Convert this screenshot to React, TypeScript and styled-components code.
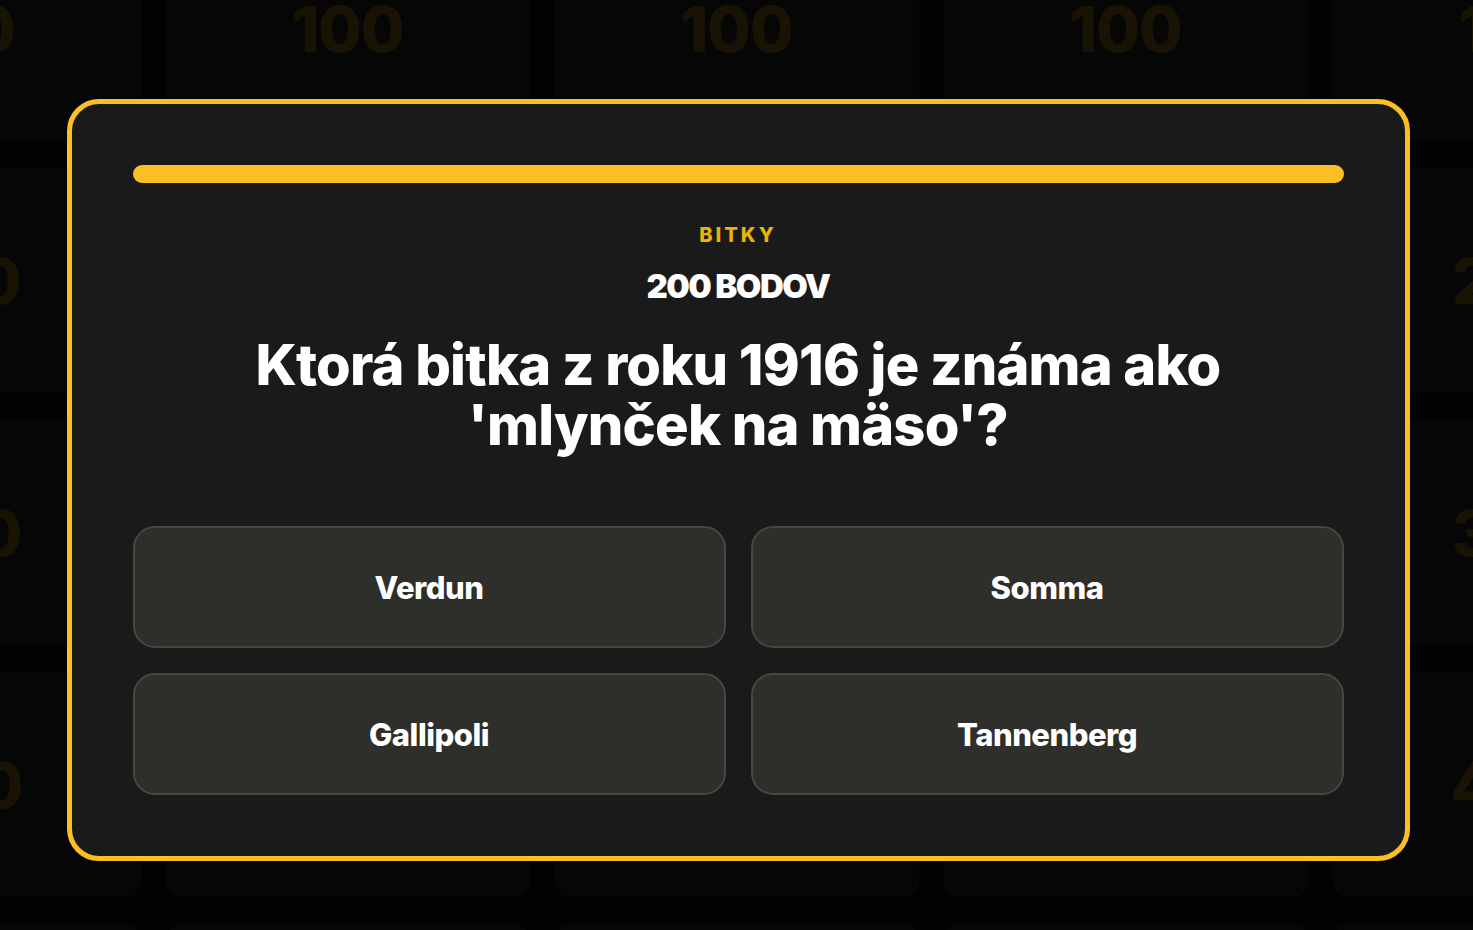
import React from 'react';
import styled, { createGlobalStyle } from 'styled-components';

const GlobalStyle = createGlobalStyle`
  html, body {
    margin: 0;
    padding: 0;
    background: #000;
  }
  body {
    font-family: Inter, "Noto Sans", "Liberation Sans", sans-serif;
  }
`;

const Screen = styled.div`
  position: relative;
  width: 100%;
  height: 930px;
  overflow: hidden;
  background: #161616;
`;

const BoardWrap = styled.div`
  display: flex;
  justify-content: center;
  margin-top: -84px;
`;

const Board = styled.div`
  flex: 0 0 1920px;
  display: grid;
  grid-template-columns: repeat(5, 364px);
  grid-auto-rows: 225px;
  column-gap: 25px;
  row-gap: 27px;
`;

const Tile = styled.div`
  display: flex;
  align-items: center;
  justify-content: center;
  background: #424242;
  border: 2px solid #4c4c4c;
  border-radius: 16px;
  box-sizing: border-box;

  font-weight: 800;
  font-size: 63px;
  letter-spacing: -1px;
  color: #fbbf24;
`;

const Overlay = styled.div`
  position: absolute;
  inset: 0;
  display: flex;
  align-items: center;
  justify-content: center;
  background: rgba(0, 0, 0, 0.9);
`;

const Modal = styled.div`
  width: 1343px;
  box-sizing: border-box;
  display: flex;
  flex-direction: column;
  align-items: stretch;
  padding: 61px;
  margin: 30px 0 0 3px;
  background: #1a1a1a;
  border: 5px solid #fbbf24;
  border-radius: 32px;
`;

const Progress = styled.div`
  height: 18px;
  border-radius: 9px;
  background: #fbbf24;
`;

const Category = styled.div`
  margin-top: 38px;
  text-align: center;
  font-weight: 800;
  font-size: 20px;
  line-height: 28px;
  letter-spacing: 3px;
  color: #eab308;
`;

const Points = styled.div`
  margin-top: 17px;
  text-align: center;
  font-weight: 900;
  font-size: 33px;
  line-height: 40px;
  letter-spacing: -1.5px;
  color: #ffffff;
`;

const Question = styled.h2`
  margin: 29px 0 0;
  text-align: center;
  font-weight: 800;
  font-size: 56px;
  line-height: 60px;
  letter-spacing: -0.8px;
  color: #ffffff;
`;

const Answers = styled.div`
  margin-top: 71px;
  display: grid;
  grid-template-columns: 1fr 1fr;
  grid-auto-rows: 122px;
  gap: 25px;
`;

const Answer = styled.button`
  display: flex;
  align-items: center;
  justify-content: center;
  background: #2e2e2a;
  border: 2px solid #47473f;
  border-radius: 22px;
  font-family: inherit;
  font-weight: 800;
  font-size: 31px;
  letter-spacing: -0.5px;
  color: #ffffff;
  cursor: pointer;
`;

const rows = [100, 200, 300, 400, 500];
const answers = ['Verdun', 'Somma', 'Gallipoli', 'Tannenberg'];

const App: React.FC = () => {
  return (
    <Screen>
      <GlobalStyle />
      <BoardWrap>
        <Board>
          {rows.map(value =>
            [0, 1, 2, 3, 4].map(col => <Tile key={`${value}-${col}`}>{value}</Tile>)
          )}
        </Board>
      </BoardWrap>
      <Overlay>
        <Modal>
          <Progress />
          <Category>BITKY</Category>
          <Points>200 BODOV</Points>
          <Question>
            Ktorá bitka z roku 1916 je známa ako
            <br />
            'mlynček na mäso'?
          </Question>
          <Answers>
            {answers.map(a => (
              <Answer key={a}>{a}</Answer>
            ))}
          </Answers>
        </Modal>
      </Overlay>
    </Screen>
  );
};

export default App;
